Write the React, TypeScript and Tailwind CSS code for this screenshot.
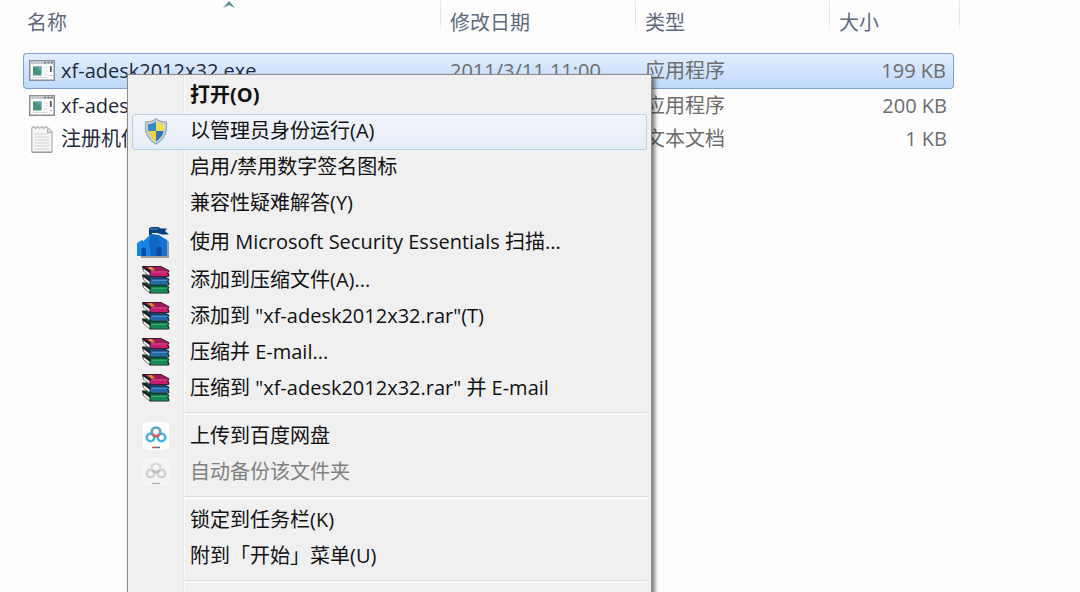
import { useId, type ReactNode } from "react";

const FONT = "font-['Open_Sans','Noto_Sans_CJK_SC',sans-serif]";

function ExeIcon() {
  return (
    <svg width="26" height="22" viewBox="0 0 26 22" aria-hidden="true">
      <rect x="0.75" y="0.75" width="24.5" height="19.5" fill="#fdfdfd" stroke="#8b8f95" strokeWidth="1.5" />
      <rect x="1.5" y="1.5" width="23" height="2.500" fill="#c3c8cf" />
      <path d="M15 2.500h2M18.500 2.500h2M22 2.500h2" stroke="#6a7078" strokeWidth="1.400" />
      <rect x="4" y="6.500" width="8.500" height="9" fill="#4a9280" />
      <path d="M7 6.500h5.500v6z" fill="#6b9db0" />
      <path d="M14.500 8h4M14.500 11h4M14.500 14h4M4 17.500h14" stroke="#d5d8dc" strokeWidth="1" />
      <path d="M21.800 6v6" stroke="#596068" strokeWidth="1.800" />
      <path d="M21 15.500h2" stroke="#a5abb2" strokeWidth="1" />
    </svg>
  );
}

function TextIcon() {
  return (
    <svg width="22" height="28" viewBox="0 0 22 28" aria-hidden="true">
      <path d="M.8 3l2-1.500 2 2 2-2 2 2 2-2 2 2 2-2 2.200 1.500 4 4V27H.8z" fill="#f6f6f6" stroke="#adadad" strokeWidth="1.200" />
      <path d="M16.500 3v4.500H21" fill="#dedede" stroke="#b4b4b4" />
      <path d="M4 9h14M4 12h14M4 15h14M4 18h14M4 21h14M4 24h14" stroke="#d2d2d2" strokeWidth="1.200" />
      <path d="M1 27.300h20" stroke="#8f8f8f" />
    </svg>
  );
}

function ShieldIcon() {
  const id = useId();
  return (
    <svg width="24" height="27" viewBox="0 0 24 27" aria-hidden="true">
      <defs>
        <clipPath id={id}>
          <path d="M12 3.500c2.500 1.800 5 2.600 8 2.800.6 8-1.500 13-8 17.200C5.500 19.300 3.400 14.300 4 6.300 7 6.100 9.500 5.300 12 3.500z" />
        </clipPath>
      </defs>
      <path d="M12 .8c3 2.200 6 3.100 10.500 3.200.9 10.200-2 17.500-10.500 22.200C3.500 21.500.6 14.200 1.500 4 6 3.900 9 3 12 .8z" fill="#c3d0d9" stroke="#8d9ba5" />
      <g clipPath={`url(#${id})`}>
        <path d="M0 0h12v13H0z" fill="#3588c6" />
        <path d="M12 0h12v13H12z" fill="#f3dc55" />
        <path d="M0 13h12v14H0z" fill="#ecd24a" />
        <path d="M12 13h12v14H12z" fill="#2b76b4" />
      </g>
    </svg>
  );
}

function CastleIcon() {
  return (
    <svg width="34" height="32" viewBox="0 0 34 32" aria-hidden="true">
      <path d="M3 29h27V14l2 2v16H4z" fill="#9b9b9b" />
      <path d="M12 9V2.500L14 1h7l3 1.500h6L28 5l4 3.500h-7L20 7h-5v4z" fill="#0b3e7c" />
      <path d="M13 2h8v2h-8z" fill="#2a68a8" />
      <path d="M0 17l5-3 1.500 1L14 8l9 2 7 4v16H0z" fill="#1a83e6" />
      <path d="M14 8l-2 8 2 14h9l1-14 2-4-4-3z" fill="#0f66c4" />
      <path d="M22 10l8 4v16h-7l-1-13z" fill="#1272d4" />
      <path d="M4.500 30v-6c0-3.500 4.500-3.500 4.500 0v6zM19.500 30v-7c0-3.500 5-3.500 5 0v7z" fill="#0a4da0" />
    </svg>
  );
}

function Book({ y, top, spine, shine }: { y: number; top: string; spine: string; shine: string }) {
  return (
    <g transform={`translate(0 ${y})`}>
      <path d="M0 0h19l8.500 4.500-1 2 1 3.500-1 1H8L1 5z" fill="#1c1c1c" />
      <path d="M2 .8h17l7 3.700H8.500z" fill={top} />
      <path d="M1.500 2.500L7.500 7v3L1.500 5z" fill="#f4f4f4" />
      <path d="M9 4.500h17.500l-1.200 2.500 1.200 3.200H9L8 7.500z" fill={spine} />
      <path d="M10 6h15" stroke={shine} strokeWidth="1" />
    </g>
  );
}

function BooksIcon() {
  return (
    <svg width="28" height="28" viewBox="0 0 28 28" aria-hidden="true">
      <Book y={16.500} top="#0d5f3a" spine="#168a52" shine="#3fa474" />
      <Book y={8.500} top="#173f6e" spine="#2468a8" shine="#4f8cc2" />
      <Book y={0} top="#a01a5a" spine="#c41c6c" shine="#d94f90" />
      <path d="M5.500 1h4.500l3 3.500H9z" fill="#d98a35" />
    </svg>
  );
}

function CloudDiskIcon({ muted = false }: { muted?: boolean }) {
  const side = muted ? "#d2d2d2" : "#45b4dc";
  return (
    <svg width="26" height="28" viewBox="0 0 26 28" aria-hidden="true">
      <rect width="26" height="28" rx="5" fill={muted ? "#f5f5f5" : "#fff"} />
      <g fill="none" strokeWidth="2.600">
        <circle cx="7.500" cy="15.500" r="3.800" stroke={side} />
        <circle cx="18.500" cy="15.500" r="3.800" stroke={side} />
        <circle cx="13" cy="9.800" r="4.300" stroke={muted ? "#dadada" : "#5d9fc9"} />
        <path d="M9.300 12c1.600 2.900 5.800 2.900 7.400 0" stroke={muted ? "#bdbdbd" : "#e0606f"} />
      </g>
      <path d="M9 25.500h4" stroke={muted ? "#b5b5b5" : "#c0566a"} strokeWidth="1.500" />
      <path d="M13 25.500h4" stroke={muted ? "#b5b5b5" : "#4f6286"} strokeWidth="1.500" />
    </svg>
  );
}

type Entry =
  | { kind: "separator" }
  | { kind: "item"; label: string; icon?: ReactNode; look?: "bold" | "hot" | "disabled" | "tall" };

const entries: Entry[] = [
  { kind: "item", label: "打开(O)", look: "bold" },
  { kind: "item", label: "以管理员身份运行(A)", icon: <ShieldIcon />, look: "hot" },
  { kind: "item", label: "启用/禁用数字签名图标" },
  { kind: "item", label: "兼容性疑难解答(Y)" },
  { kind: "item", label: "使用 Microsoft Security Essentials 扫描...", icon: <CastleIcon />, look: "tall" },
  { kind: "item", label: "添加到压缩文件(A)...", icon: <BooksIcon /> },
  { kind: "item", label: '添加到 "xf-adesk2012x32.rar"(T)', icon: <BooksIcon /> },
  { kind: "item", label: "压缩并 E-mail...", icon: <BooksIcon /> },
  { kind: "item", label: '压缩到 "xf-adesk2012x32.rar" 并 E-mail', icon: <BooksIcon /> },
  { kind: "separator" },
  { kind: "item", label: "上传到百度网盘", icon: <CloudDiskIcon /> },
  { kind: "item", label: "自动备份该文件夹", icon: <CloudDiskIcon muted />, look: "disabled" },
  { kind: "separator" },
  { kind: "item", label: "锁定到任务栏(K)" },
  { kind: "item", label: "附到「开始」菜单(U)" },
  { kind: "separator" },
];

const looks = {
  plain: "h-9 border-transparent text-[#111]",
  bold: "h-9 border-transparent font-bold text-[#111]",
  hot: "h-9 border-[#b4d3e6] bg-linear-to-b from-[#f2f5fa] to-[#e6edf8] text-[#111]",
  disabled: "h-9 border-transparent text-[#808080]",
  tall: "h-[41px] border-transparent text-[#111]",
};

function ContextMenu() {
  return (
    <div
      role="menu"
      className="absolute left-[127px] top-[74px] w-[525px] border border-[#8c8c8c] bg-[#f0f0f0] bg-[linear-gradient(to_right,transparent_55px,#e6e6e6_55px,#e6e6e6_56px,#fbfbfb_56px,#fbfbfb_57px,transparent_57px)] px-1 pt-[3px] pb-10 shadow-[3px_3px_4px_rgba(0,0,0,0.5)]"
    >
      {entries.map((entry, i) =>
        entry.kind === "separator" ? (
          <div key={i} role="separator" className="ml-[52px] flex h-3 items-center">
            <div className="h-[3px] w-full border-t border-[#dadada] bg-[#fbfbfb]" />
          </div>
        ) : (
          <button
            key={i}
            type="button"
            role="menuitem"
            disabled={entry.look === "disabled"}
            className={`flex w-full items-center rounded-[3px] border pb-0.5 text-left whitespace-nowrap ${looks[entry.look ?? "plain"]}`}
          >
            <span className={`mr-3 flex w-[45px] shrink-0 ${entry.look === "tall" ? "pl-1" : "justify-center"}`}>
              {entry.icon}
            </span>
            {entry.label}
          </button>
        ),
      )}
    </div>
  );
}

const files = [
  { name: "xf-adesk2012x32.exe", date: "2011/3/11 11:00", type: "应用程序", size: "199 KB", icon: <ExeIcon />, selected: true },
  { name: "xf-adesk2012x64.exe", date: "", type: "应用程序", size: "200 KB", icon: <ExeIcon />, selected: false },
  { name: "注册机使用", date: "", type: "文本文档", size: "1 KB", icon: <TextIcon />, selected: false },
];

const divider =
  "bg-[linear-gradient(to_bottom,#e6e9ee,#dfe3e9_60%,#fff)] bg-[length:1px_34px] bg-right-top bg-no-repeat";
const headCell = "h-[53px] pb-2 pl-[9px] text-left font-normal";
const selectedCell =
  "h-9 border-y border-[#7da2ce] bg-linear-to-b from-[#e2eefe] to-[#bfd9fb] first:rounded-l-[4px] first:border-l";
const plainCell = "h-[33px] border-transparent first:border-l";

export default function App() {
  return (
    <main className={`relative h-screen overflow-hidden bg-[#fdfdfd] text-[20px] leading-7 ${FONT}`}>
      <table className="w-full table-fixed border-separate border-spacing-0 pl-[23px] text-[#6d6d6d]">
        <colgroup>
          <col />
          <col className="w-[195px]" />
          <col className="w-[194px]" />
          <col className="w-[124px]" />
          <col className="w-1.5" />
          <col className="w-[120px]" />
        </colgroup>
        <thead className="text-[#5f6a7d]">
          <tr>
            <th scope="col" aria-sort="ascending" className={`relative h-[53px] pb-2 pl-1 text-left font-normal ${divider}`}>
              名称
              <svg className="absolute left-[200px] top-0" width="12" height="9" viewBox="0 0 12 9" aria-hidden="true">
                <path d="M0 8l6-7 6 7-6-3z" fill="#5b8e92" />
              </svg>
            </th>
            <th scope="col" className={`${headCell} ${divider}`}>修改日期</th>
            <th scope="col" className={`${headCell} ${divider}`}>类型</th>
            <th scope="col" className={headCell}>大小</th>
            <td className={divider} />
            <td />
          </tr>
        </thead>
        <tbody>
          {files.map((file) => {
            const cell = file.selected ? selectedCell : plainCell;
            return (
              <tr key={file.name} aria-selected={file.selected}>
                <td className={`pl-[5px] text-[#1f2a3a] ${cell}`}>
                  <div className="flex items-center whitespace-nowrap">
                    <span className="mr-1.5 flex w-[26px] shrink-0 justify-center">{file.icon}</span>
                    {file.name}
                  </div>
                </td>
                <td className={`pl-[9px] whitespace-nowrap ${cell}`}>{file.date}</td>
                <td className={`pl-[9px] whitespace-nowrap ${cell}`}>{file.type}</td>
                <td className={`pr-[7px] text-right whitespace-nowrap ${cell} ${file.selected ? "rounded-r-[4px] border-r" : ""}`}>
                  {file.size}
                </td>
              </tr>
            );
          })}
        </tbody>
      </table>
      <ContextMenu />
    </main>
  );
}
